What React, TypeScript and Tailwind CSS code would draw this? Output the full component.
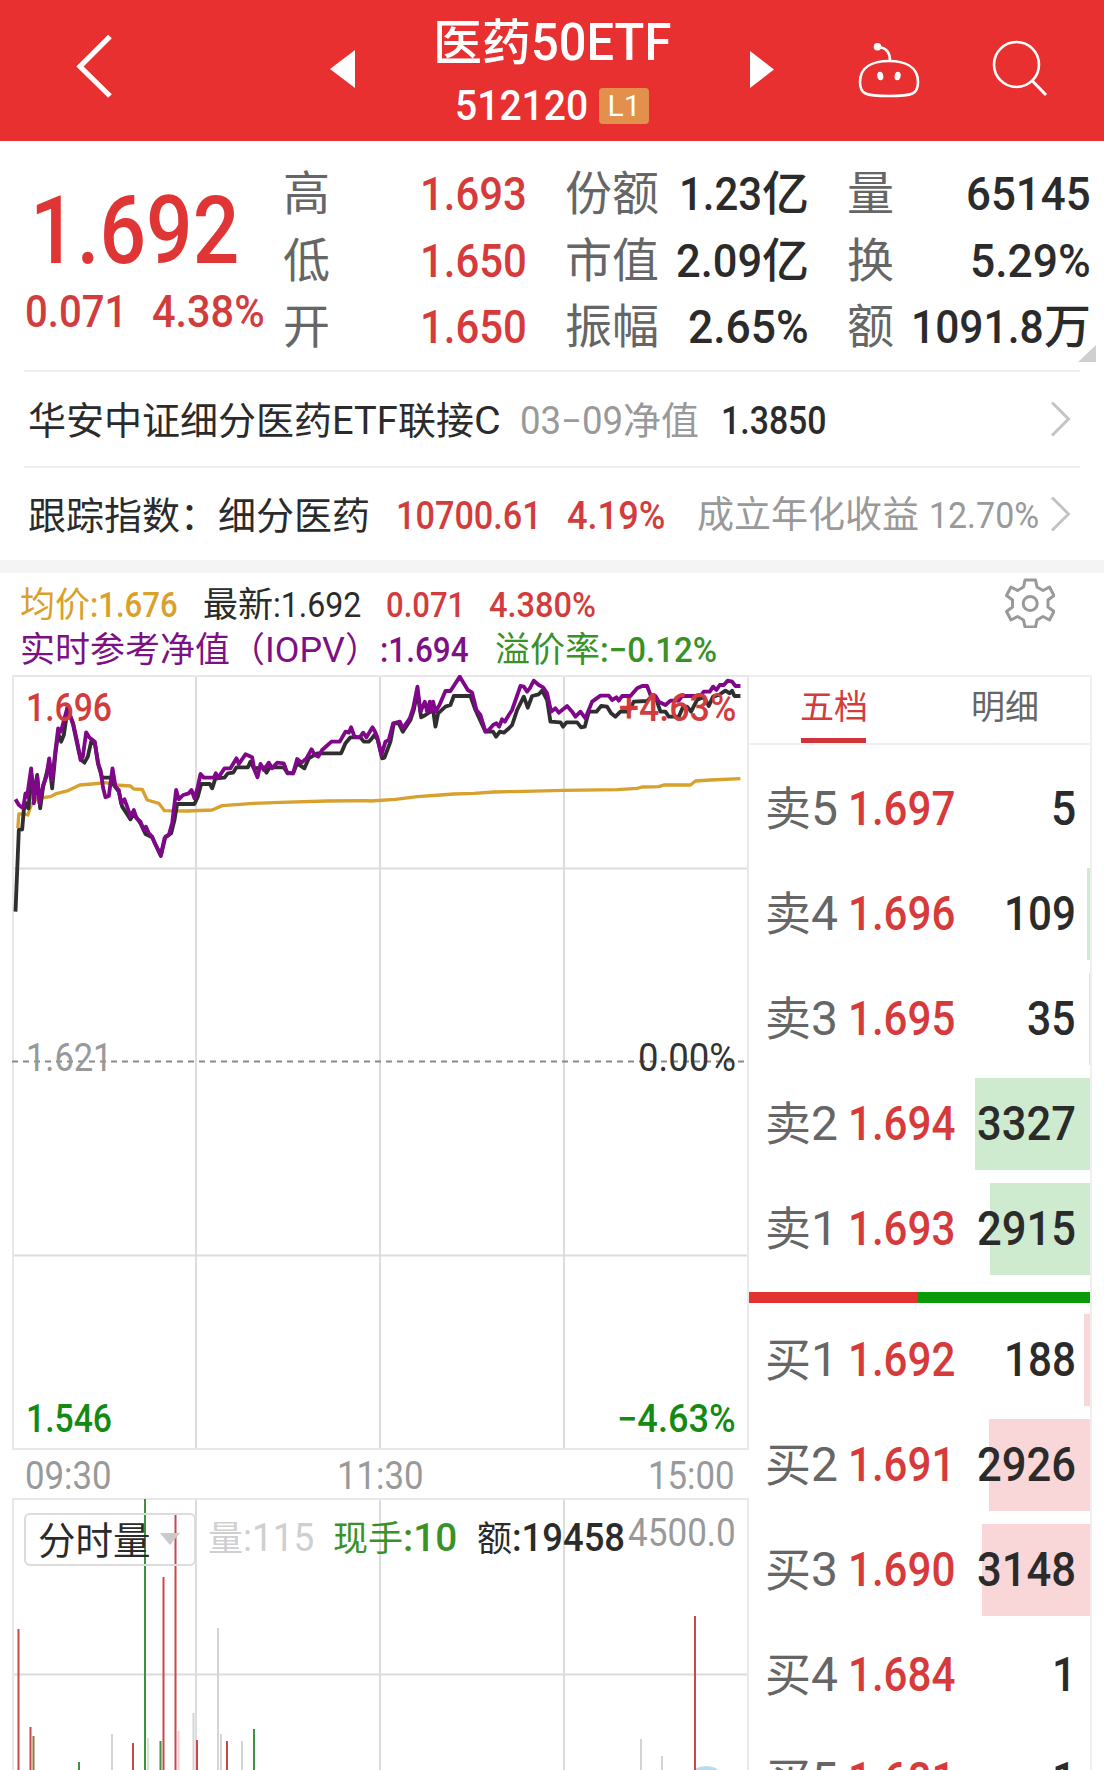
import { useLayoutEffect, useRef, useState } from "react";
import type { ReactNode } from "react";

type TFit = { w: number; className?: string; children: ReactNode };

// Squeezes a run of digits into a fixed width, like a condensed DIN face
const Fit = ({ w, className = "", children }: TFit) => {
  const ref = useRef<HTMLSpanElement>(null);
  const [scale, setScale] = useState(1);

  useLayoutEffect(() => {
    if (ref.current) {
      setScale(w / ref.current.offsetWidth);
    }
  }, [w, children]);

  return (
    <span
      className={`inline-block shrink-0 whitespace-nowrap ${className}`}
      style={{ width: w }}
    >
      <span
        ref={ref}
        className="inline-block origin-left"
        style={{ transform: `scaleX(${scale})` }}
      >
        {children}
      </span>
    </span>
  );
};

type TStat = { label: string; value: string; w: number; unit?: string };

const stats: TStat[][] = [
  [
    { label: "高", value: "1.693", w: 107 },
    { label: "低", value: "1.650", w: 107 },
    { label: "开", value: "1.650", w: 107 },
  ],
  [
    { label: "份额", value: "1.23", w: 83, unit: "亿" },
    { label: "市值", value: "2.09", w: 86, unit: "亿" },
    { label: "振幅", value: "2.65%", w: 121 },
  ],
  [
    { label: "量", value: "65145", w: 125 },
    { label: "换", value: "5.29%", w: 121 },
    { label: "额", value: "1091.8", w: 133, unit: "万" },
  ],
];

type TOrder = {
  label: string;
  price: string;
  volume: string;
  w: number;
  bar: number;
};

const sells: TOrder[] = [
  { label: "卖5", price: "1.697", volume: "5", w: 25, bar: 0 },
  { label: "卖4", price: "1.696", volume: "109", w: 72, bar: 3 },
  { label: "卖3", price: "1.695", volume: "35", w: 49, bar: 1 },
  { label: "卖2", price: "1.694", volume: "3327", w: 99, bar: 115 },
  { label: "卖1", price: "1.693", volume: "2915", w: 99, bar: 100 },
];

const buys: TOrder[] = [
  { label: "买1", price: "1.692", volume: "188", w: 72, bar: 6 },
  { label: "买2", price: "1.691", volume: "2926", w: 99, bar: 101 },
  { label: "买3", price: "1.690", volume: "3148", w: 99, bar: 108 },
  { label: "买4", price: "1.684", volume: "1", w: 24, bar: 0 },
  { label: "买5", price: "1.681", volume: "1", w: 24, bar: 0 },
];

// Line data in thirds of a pixel, second half counted from its own start
const SECOND_HALF = 1110;

const iopv = [
  "45,418 55,435 68,445 75,400 80,410 84,380 92,325 100,430 110,350 117,430 128,375 138,350 146,295 155,360 165,270 173,205 181,215 188,190 202,138 210,170 218,190 232,255 240,300 247,290 257,217 266,232 283,245 292,310 300,330 308,385 315,412 325,408 336,325 345,380 355,390 362,430 372,418 380,440 390,470 400,450 408,475 420,485 430,510 436,500 445,520 455,530 463,550 481,585 492,535 505,525 515,490 527,390 535,418 548,405 565,400 573,390 582,415 592,380 600,342 610,353 640,353 646,340 652,355 672,325 690,325 708,295 715,312 735,283 755,292 762,330 771,352 780,312 790,330 805,308 815,325 830,308 850,310 860,338 878,340 890,297 903,308 918,295 933,268 943,285 953,290 965,270 993,245 1018,245 1035,215 1045,218 1052,202 1062,230 1078,232 1088,218 1098,232",
  "6,202 14,215 20,230 33,285 45,245 55,240 68,190 88,185 97,205 118,175 128,145 141,80 150,155 163,125 170,155 178,125 183,155 188,125 195,155 207,135 225,93 240,93 268,50 292,90 305,98 318,150 330,165 345,215 355,210 368,195 378,190 386,200 395,178 403,185 415,165 425,150 450,78 460,80 470,95 478,85 490,62 505,75 518,82 530,100 542,155 555,145 565,158 590,138 605,155 615,170 630,155 645,175 665,125 690,107 715,107 725,120 738,112 745,122 755,108 780,108 800,85 815,78 830,78 842,110 855,108 865,125 885,135 900,122 925,122 935,108 990,108 1000,95 1018,95 1028,80 1038,90 1048,75 1060,75 1072,62 1085,65 1095,78 1110,78",
];

const latest = [
  "45,755 55,510 65,508 70,450 78,430 84,445 92,340 100,400 110,345 119,445 128,380 146,310 155,385 165,280 173,220 182,245 190,225 202,145 218,195 235,275 243,300 252,308 262,290 272,245 283,250 295,320 305,353 330,353 340,375 355,395 365,440 378,460 390,478 400,460 420,490 435,522 455,532 481,588 495,530 512,520 522,480 530,432 582,432 592,410 602,372 628,372 635,385 645,355 672,353 682,340 698,338 708,322 742,322 750,305 760,325 790,322 798,338 808,322 850,322 862,340 878,340 890,310 912,325 925,295 950,280 1022,280 1035,250 1050,232 1080,232 1090,245 1105,245",
  "2,238 12,225 22,240 35,295 42,293 60,245 70,190 85,190 97,215 120,180 130,150 141,95 152,172 165,165 188,150 195,200 203,160 225,140 240,135 250,108 300,108 315,150 345,215 368,215 377,230 388,215 400,218 412,208 425,195 440,150 460,110 472,143 485,108 505,103 515,92 530,120 540,185 570,187 578,200 588,187 620,187 632,202 643,200 655,155 678,155 692,138 710,140 722,160 735,170 750,155 775,155 790,125 830,123 845,108 858,120 870,155 885,155 895,170 925,170 938,140 950,140 962,155 980,120 1000,110 1015,138 1028,110 1045,105 1065,92 1078,100 1085,92 1092,108 1110,108",
];

const average = [
  "52,505 55,462 70,462 82,465 92,435 110,415 150,410 165,402 200,393 238,375 275,372 315,368 345,375 390,378 400,387 425,388 440,420 475,430 492,452 560,453 635,450 665,437 760,430 840,427 980,423 1100,422",
  "0,423 75,418 140,410 210,405 250,402 310,400 370,396 460,394 580,391 740,389 800,385 815,381 865,380 880,375 960,375 975,363 1020,360 1110,356",
];

const toPoints = ([first, second]: string[]) => {
  const shifted = second.split(" ").map((pair) => {
    const [x, y] = pair.split(",").map(Number);
    return `${x + SECOND_HALF},${y}`;
  });
  return `${first} ${shifted.join(" ")}`;
};

const RED = "#c9484c";
const GREEN = "#3f9142";
const GRAY = "#d4d4d4";

// x, top, color
const volumes: [number, number, string][] = [
  [18.5, 1629, RED],
  [30.5, 1727, RED],
  [33.5, 1736, "#8a7a3c"],
  [79, 1762, GREEN],
  [112, 1734, GRAY],
  [133, 1743, RED],
  [145, 1499, GREEN],
  [148, 1738, "#cfe6cf"],
  [160.5, 1741, GREEN],
  [163.5, 1577, RED],
  [175.5, 1514, RED],
  [178.5, 1731, "#f6cfcf"],
  [193.5, 1713, GRAY],
  [197, 1740, RED],
  [218, 1628, GRAY],
  [221, 1734, GRAY],
  [227, 1741, RED],
  [242, 1741, GRAY],
  [254, 1729, GREEN],
  [641, 1739, GRAY],
  [662, 1756, GRAY],
  [695, 1616, RED],
];

const Header = () => (
  <header className="flex h-[141px] items-start bg-[#e83030] text-white">
    <svg className="mt-[34px] ml-[76px] h-[65px] w-[37px]" viewBox="0 0 37 65" fill="none">
      <path d="M34 2.5 4 32.5 34 62" stroke="#fff" strokeWidth="5.2" />
    </svg>
    <svg className="mt-[50px] ml-[217px] h-[38px] w-[25px]" viewBox="0 0 25 38">
      <path d="M25 0v38L0 19z" fill="#fff" />
    </svg>
    <div className="ml-[43px] w-[308px] pt-[15px]">
      <div className="flex items-baseline justify-center text-[49px] leading-[56px] font-medium">
        医药
        <Fit w={140} className="text-[52px]">
          50ETF
        </Fit>
      </div>
      <div className="mt-[10px] flex h-12 items-center justify-center">
        <Fit w={133} className="text-[42px] leading-[48px] font-medium">
          512120
        </Fit>
        <span className="ml-[11px] flex h-9 w-[50px] items-center justify-center rounded-sm bg-[#e2904b]">
          <Fit w={33} className="text-[30px] leading-9">
            L1
          </Fit>
        </span>
      </div>
    </div>
    <svg className="mt-[51px] ml-[44px] h-[37px] w-[24px]" viewBox="0 0 24 37">
      <path d="M0 0v37l24-18.500z" fill="#fff" />
    </svg>
    <svg className="mt-[41px] ml-[84px] h-[58px] w-[62px]" viewBox="0 0 62 58" fill="none">
      <path
        d="M31 20c15 0 29 5 29 21 0 12-5 14-29 14S2 53 2 41c0-16 14-21 29-21z"
        stroke="#fff"
        strokeWidth="2.600"
      />
      <path d="M20 6c8 .5 12 5 12 14" stroke="#fff" strokeWidth="2.600" />
      <circle cx="19.500" cy="5.800" r="3.800" fill="#fff" />
      <ellipse cx="22.300" cy="35" rx="3" ry="4.300" fill="#fff" transform="rotate(-10 22 35)" />
      <ellipse cx="39.600" cy="35" rx="3" ry="4.300" fill="#fff" transform="rotate(10 40 35)" />
    </svg>
    <svg className="mt-[40px] ml-[72px] h-[58px] w-[57px]" viewBox="0 0 57 58" fill="none">
      <circle cx="24.500" cy="24.500" r="22.500" stroke="#fff" strokeWidth="2.600" />
      <path d="M40.500 41 54 55" stroke="#fff" strokeWidth="3" />
    </svg>
  </header>
);

const Summary = () => (
  <section className="relative flex h-[229px]">
    <div className="w-[283px] text-[#e03535]">
      <Fit w={209} className="mt-[40px] ml-[30px] text-[95px] leading-[100px] font-medium">
        1.692
      </Fit>
      <div className="flex pl-[25px] text-[44px] leading-[62px] font-medium text-[#d23c3c]">
        <Fit w={102}>0.071</Fit>
        <Fit w={113} className="ml-[25px]">
          4.38%
        </Fit>
      </div>
    </div>
    {stats.map((column, i) => (
      <div key={i} className={`w-[244px] pt-[20px] ${i > 0 ? "ml-[38px]" : ""}`}>
        {column.map((item) => (
          <div
            key={item.label}
            className="flex h-[66.600px] items-center justify-between text-[47px] leading-[60px]"
          >
            <span className="text-[#666]">{item.label}</span>
            <span
              className={`flex items-center font-medium ${
                i === 0 ? "text-[#d63a3a]" : "text-[#2b2b2b]"
              }`}
            >
              <Fit w={item.w}>{item.value}</Fit>
              {item.unit}
            </span>
          </div>
        ))}
      </div>
    ))}
    <svg className="absolute right-2 bottom-2 h-[17px] w-[18px]" viewBox="0 0 18 17">
      <path d="M18 0v17H0z" fill="#cfcfcf" />
    </svg>
  </section>
);

const Chevron = ({ className }: { className: string }) => (
  <svg className={`h-[36px] w-[21px] ${className}`} viewBox="0 0 21 36" fill="none">
    <path d="M2 1.500 18.500 18 2 34.500" stroke="#c4c4c4" strokeWidth="3" />
  </svg>
);

const FundRows = () => (
  <section className="px-6 text-[38px] text-[#2b2b2b]">
    <div className="flex h-24 items-center border-t-2 border-[#efefef] pt-[3px] pl-[4px] leading-[60px]">
      华安中证细分医药<Fit w={66}>ETF</Fit>联接<Fit w={27}>C</Fit>
      <span className="ml-[19px] flex text-[#999]">
        <Fit w={103}>03−09</Fit>净值
      </span>
      <Fit w={106} className="ml-[22px] font-medium">
        1.3850
      </Fit>
      <Chevron className="mr-[9px] mb-[3px] ml-auto" />
    </div>
    <div className="flex h-[94px] items-center border-t-2 border-[#efefef] pt-[4px] pl-[4px] leading-[60px]">
      跟踪指数：细分医药
      <Fit w={146} className="ml-[26px] font-medium text-[#d23c3c]">
        10700.61
      </Fit>
      <Fit w={98} className="ml-[25px] font-medium text-[#d23c3c]">
        4.19%
      </Fit>
      <span className="ml-[32px] flex text-[37px] text-[#999]">
        成立年化收益
        <Fit w={110} className="ml-[10px]">
          12.70%
        </Fit>
      </span>
      <Chevron className="mr-[9px] mb-[4px] ml-auto" />
    </div>
  </section>
);

const Legend = () => (
  <section className="flex h-[102px] justify-between pl-[20px] text-[35px] leading-[45px]">
    <div className="pt-[10px]">
      <div className="flex">
        <span className="flex text-[#d9a02b]">
          均价
          <Fit w={88} className="font-medium">
            :1.676
          </Fit>
        </span>
        <span className="ml-[25px] flex text-[#2b2b2b]">
          最新<Fit w={88}>:1.692</Fit>
        </span>
        <Fit w={79} className="ml-[25px] font-medium text-[#d23c3c]">
          0.071
        </Fit>
        <Fit w={107} className="ml-[24px] font-medium text-[#d23c3c]">
          4.380%
        </Fit>
      </div>
      <div className="flex">
        <span className="flex text-[#7d1085]">
          实时参考净值（<Fit w={80}>IOPV</Fit>）
          <Fit w={89} className="font-medium">
            :1.694
          </Fit>
        </span>
        <span className="ml-[26px] flex text-[#3a9127]">
          溢价率
          <Fit w={117} className="font-medium">
            :−0.12%
          </Fit>
        </span>
      </div>
    </div>
    <svg className="mt-[5px] mr-[49px] h-[50px] w-[50px]" viewBox="0 0 50 50" fill="none">
      <path
        d="M20 2h10.500l1.500 7 6 3.500 6.500-3.500 4.500 8.500-6 4.500v7l6 4.500-4.500 8.500-6.500-3.500-6 3.500-1.500 7H20l-1.500-7-6-3.500L6 42l-4.500-8.500 6-4.500v-7l-6-4.500L6 9l6.500 3.500 6-3.500z"
        stroke="#999"
        strokeWidth="3"
        strokeLinejoin="round"
      />
      <circle cx="25.200" cy="25.500" r="7" stroke="#999" strokeWidth="3" />
    </svg>
  </section>
);

const PriceChart = () => (
  <div className="relative h-[775px] text-[38px] leading-[44px] font-medium">
    <svg className="h-[775px] w-[737px]" viewBox="12 675 737 775" fill="none">
      <g stroke="#dcdcdc" strokeWidth="2">
        <path d="M12 868.500H748M12 1255.500H748M196 675V1449M380 675V1449M564 675V1449" />
        <path d="M13 676H748V1449H13z" stroke="#e8e8e8" />
      </g>
      <path d="M12 1061.500H748" stroke="#8a8a8a" strokeWidth="1.800" strokeDasharray="6 5" />
      <g
        transform="translate(0.5 660) scale(.3333)"
        strokeLinejoin="round"
        strokeWidth="11.500"
      >
        <polyline points={toPoints(average)} stroke="#d8a02c" strokeWidth="10" />
        <polyline points={toPoints(latest)} stroke="#2f2f2f" />
        <polyline points={toPoints(iopv)} stroke="#80078a" />
      </g>
    </svg>
    <Fit w={86} className="absolute top-[11px] left-[14px] text-[#d23c3c]">
      1.696
    </Fit>
    <Fit w={117} className="absolute top-[11px] right-[13px] text-[#d23c3c]">
      +4.63%
    </Fit>
    <Fit w={86} className="absolute top-[361px] left-[14px] font-normal text-[#999]">
      1.621
    </Fit>
    <Fit w={98} className="absolute top-[361px] right-[13px] font-normal text-[#333]">
      0.00%
    </Fit>
    <Fit w={86} className="absolute bottom-[9px] left-[14px] text-[#148a14]">
      1.546
    </Fit>
    <Fit w={119} className="absolute right-[13px] bottom-[9px] text-[#148a14]">
      −4.63%
    </Fit>
  </div>
);

const VolumeChart = () => (
  <div className="relative h-[273px] overflow-hidden">
    <svg className="h-[273px] w-[737px]" viewBox="12 1498 737 273" fill="none">
      <path
        d="M12 1674.500H748M196 1499V1771M380 1499V1771M564 1499V1771"
        stroke="#dcdcdc"
        strokeWidth="2"
      />
      <path d="M13 1771V1499H748V1771" stroke="#e8e8e8" strokeWidth="2" />
      <circle cx="706" cy="1787" r="21" fill="#b9daf0" />
      {volumes.map(([x, top, color]) => (
        <path key={x} d={`M${x} ${top}V1771`} stroke={color} strokeWidth="2" />
      ))}
    </svg>
    <div className="absolute top-[13px] left-[12px] flex items-center text-[35px] leading-[54px]">
      <div className="flex h-[53px] w-[172px] items-center rounded-md border-2 border-[#dcdcdc] pt-[4px] pl-[12px] text-[37.500px] text-[#2b2b2b]">
        分时量
        <svg className="mb-[5px] ml-[9px] h-[12px] w-[20px]" viewBox="0 0 20 12">
          <path d="M0 0h20l-10 12z" fill="#cacaca" />
        </svg>
      </div>
      <span className="ml-[12px] flex items-baseline text-[#cfcfcf]">
        量
        <Fit w={71} className="text-[38px]">
          :115
        </Fit>
      </span>
      <span className="ml-[19px] flex items-baseline text-[#3a9127]">
        现手
        <Fit w={54} className="text-[38px] font-medium">
          :10
        </Fit>
      </span>
      <span className="ml-[20px] flex items-baseline text-[#2b2b2b]">
        额
        <Fit w={113} className="text-[38px] font-medium">
          :19458
        </Fit>
      </span>
    </div>
    <Fit
      w={108}
      className="absolute top-[13px] right-[13px] text-[38px] leading-[44px] text-[#999]"
    >
      4500.0
    </Fit>
  </div>
);

const OrderRow = ({ order, color }: { order: TOrder; color: string }) => (
  <div className="relative mb-[13px] flex h-[92px] items-center pl-[16px] leading-[60px]">
    <div
      className={`absolute top-0 right-0 h-full ${color}`}
      style={{ width: order.bar }}
    />
    <span className="relative flex items-baseline text-[46px] text-[#666]">
      {order.label[0]}
      <Fit w={27} className="text-[48px]">
        {order.label[1]}
      </Fit>
    </span>
    <Fit w={107} className="relative ml-[10px] text-[48px] font-medium text-[#d63a3a]">
      {order.price}
    </Fit>
    <Fit
      w={order.w}
      className="relative mr-[14px] ml-auto text-[48px] font-medium text-[#2b2b2b]"
    >
      {order.volume}
    </Fit>
  </div>
);

const OrderBook = () => (
  <aside className="w-[343px] border-t-2 border-r-2 border-[#efefef]">
    <div className="flex h-[68px] border-b-2 border-[#efefef] text-[34px] leading-[61px]">
      <div className="ml-[51px] w-[68px] whitespace-nowrap text-[#d23c3c]">
        五档
        <div className="ml-[1px] h-[5px] w-[65px] bg-[#d13438]" />
      </div>
      <div className="ml-[103px] text-[#666]">明细</div>
    </div>
    <div className="pt-[18px]">
      {sells.map((order) => (
        <OrderRow key={order.label} order={order} color="bg-[#cfebcf]" />
      ))}
    </div>
    <div className="mt-[17px] mb-[11px] flex h-[11px]">
      <div className="w-[169px] bg-[#e23232]" />
      <div className="grow bg-[#0a9a0a]" />
    </div>
    {buys.map((order) => (
      <OrderRow key={order.label} order={order} color="bg-[#f9d6d8]" />
    ))}
  </aside>
);

const App = () => {
  return (
    <div className="h-[1770px] w-[1104px] overflow-hidden bg-white font-[family-name:Roboto,'Noto_Sans_CJK_SC',sans-serif]">
      <Header />
      <Summary />
      <FundRows />
      <div className="h-[13px] bg-[#f4f4f4]" />
      <Legend />
      <main className="flex h-[1097px] pl-[12px]">
        <div className="w-[737px]">
          <PriceChart />
          <div className="flex h-[48px] items-center justify-between pt-[4px] pr-[14px] pl-[13px] text-[38px] leading-[44px] text-[#999]">
            <Fit w={87}>09:30</Fit>
            <Fit w={87}>11:30</Fit>
            <Fit w={87}>15:00</Fit>
          </div>
          <VolumeChart />
        </div>
        <OrderBook />
      </main>
    </div>
  );
};

export default App;
